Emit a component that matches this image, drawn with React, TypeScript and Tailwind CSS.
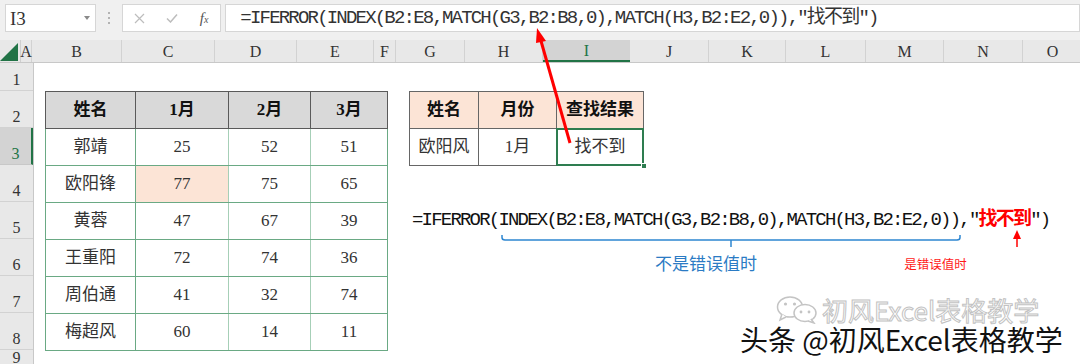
import React from "react";

const serif = "font-['Liberation_Serif','Noto_Sans_CJK_SC',serif]";
const mono = "font-['Liberation_Mono','Noto_Sans_CJK_SC',monospace]";

const columns: [string, string][] = [
  ["A", "w-[11px]"],
  ["B", "w-[90px]"],
  ["C", "w-[93px]"],
  ["D", "w-[82px]"],
  ["E", "w-[77px]"],
  ["F", "w-[22px]"],
  ["G", "w-[69px]"],
  ["H", "w-[78px]"],
  ["I", "w-[87px]"],
  ["J", "w-[79px]"],
  ["K", "w-[77px]"],
  ["L", "w-[80px]"],
  ["M", "w-[78px]"],
  ["N", "w-[79px]"],
  ["O", "w-[60px]"],
];

const rowHeights = ["h-[28px]", "h-[37px]", "h-[37px]", "h-[37px]", "h-[37px]", "h-[37px]", "h-[37px]", "h-[37px]", "h-[19px]"];

const scores: [string, number, number, number][] = [
  ["郭靖", 25, 52, 51],
  ["欧阳锋", 77, 75, 65],
  ["黄蓉", 47, 67, 39],
  ["王重阳", 72, 74, 36],
  ["周伯通", 41, 32, 74],
  ["梅超风", 60, 14, 11],
];

function FormulaText({ red }: { red?: boolean }) {
  return (
    <>
      =IFERROR(INDEX(B2:E8,MATCH(G3,B2:B8,0),MATCH(H3,B2:E2,0)),"
      <span className={red ? "text-[#ff0000] font-bold" : ""}>找不到</span>")
    </>
  );
}

function FormulaBar() {
  return (
    <div className="h-[40px] bg-[#f0f0f0] flex items-start pt-[4px] pl-[5px]">
      <div className="w-[91px] h-[28px] bg-white border border-[#d6d6d6] flex items-center justify-between pl-[4px] pr-[5px]">
        <span className={`${serif} text-[19px] text-[#333] leading-none`}>I3</span>
        <svg width="6" height="4" viewBox="0 0 6 4">
          <path d="M0 0h6L3 4z" fill="#8a8a8a" />
        </svg>
      </div>
      <div className="w-[27px] h-[28px] flex flex-col items-center justify-center gap-[3px]">
        <span className="w-[2px] h-[2px] bg-[#b3b3b3]" />
        <span className="w-[2px] h-[2px] bg-[#b3b3b3]" />
        <span className="w-[2px] h-[2px] bg-[#b3b3b3]" />
      </div>
      <div className="w-[99px] h-[28px] bg-white border border-[#d6d6d6] flex items-center">
        <div className="w-[33px] flex justify-center">
          <svg width="11" height="11" viewBox="0 0 11 11">
            <path d="M1 1l9 9M10 1l-9 9" stroke="#bdbdbd" strokeWidth="1.2" />
          </svg>
        </div>
        <div className="w-[33px] flex justify-center">
          <svg width="12" height="10" viewBox="0 0 12 10">
            <path d="M1 5.5l3.5 3.5L11 1.5" stroke="#bdbdbd" strokeWidth="1.5" fill="none" />
          </svg>
        </div>
        <div className="w-[33px] flex justify-center">
          <span className={`${serif} italic text-[15px] text-[#555] leading-none`}>
            f<span className="text-[10px]">x</span>
          </span>
        </div>
      </div>
      <div className="ml-[4px] w-[860px] h-[28px] bg-white border border-[#d6d6d6] pl-[14px] flex items-center">
        <span className={`${mono} text-[19px] tracking-[-1.8px] text-[#333] leading-none whitespace-nowrap`}>
          <FormulaText />
        </span>
      </div>
    </div>
  );
}

function ColumnHeaders() {
  return (
    <div className="h-[23px] bg-[#e8e8e8] border-b border-[#c8c8c8] flex">
      <div className="w-[34px] h-full border-r border-[#cfcfcf] flex items-end justify-end pr-[2px] pb-[1px]">
        <svg width="18" height="18" viewBox="0 0 18 18">
          <path d="M18 0V18H0z" fill="#217346" />
        </svg>
      </div>
      {columns.map(([name, w]) => (
        <div
          key={name}
          className={`${w} shrink-0 h-full flex items-center justify-center pt-[2px] ${serif} text-[16px] leading-none ${
            name === "I"
              ? "bg-[#d3d3d3] border-b-2 border-[#217346] text-[#217346]"
              : "border-r border-[#d2d2d2] text-[#333]"
          }`}
        >
          {name}
        </div>
      ))}
    </div>
  );
}

function RowHeaders() {
  return (
    <div className="w-[34px] shrink-0 flex flex-col bg-[#e8e8e8] border-r border-[#c8c8c8]">
      {rowHeights.map((h, i) => (
        <div
          key={i}
          className={`${h} shrink-0 flex items-end justify-center pb-[1px] ${serif} text-[16px] leading-[18px] ${
            i === 2
              ? "bg-[#d3d3d3] border-r-2 border-[#217346] text-[#217346] border-b border-b-[#c8c8c8]"
              : "border-b border-[#d2d2d2] text-[#333]"
          }`}
        >
          {i + 1}
        </div>
      ))}
    </div>
  );
}

function ScoreTable() {
  const th = "border border-[#5a5a5a] bg-[#d9d9d9] font-bold text-[17px] text-[#111]";
  const td = "border border-[#6aa984] text-[17px] text-[#333] text-center";
  return (
    <table className={`w-full h-full border-collapse table-fixed ${serif}`}>
      <colgroup>
        <col className="w-[90px]" />
        <col className="w-[93px]" />
        <col className="w-[82px]" />
        <col className="w-[77px]" />
      </colgroup>
      <thead>
        <tr className="h-[37px]">
          <th className={th}>姓名</th>
          <th className={th}>1月</th>
          <th className={th}>2月</th>
          <th className={th}>3月</th>
        </tr>
      </thead>
      <tbody>
        {scores.map(([name, a, b, c]) => (
          <tr key={name} className="h-[37px]">
            <td className={td}>{name}</td>
            <td className={`${td} border-r-[#a6cfb7] ${a === 77 ? "bg-[#fce4d6]" : ""}`}>{a}</td>
            <td className={`${td} border-r-[#a6cfb7]`}>{b}</td>
            <td className={td}>{c}</td>
          </tr>
        ))}
      </tbody>
    </table>
  );
}

function LookupTable() {
  const th = "border border-[#666] bg-[#fce4d6] font-bold text-[17px] text-[#111]";
  const td = "border border-[#666] text-[17px] text-[#333] text-center";
  return (
    <table className={`w-full h-full border-collapse table-fixed ${serif}`}>
      <colgroup>
        <col className="w-[69px]" />
        <col className="w-[78px]" />
        <col className="w-[87px]" />
      </colgroup>
      <thead>
        <tr className="h-[37px]">
          <th className={th}>姓名</th>
          <th className={th}>月份</th>
          <th className={th}>查找结果</th>
        </tr>
      </thead>
      <tbody>
        <tr className="h-[37px]">
          <td className={td}>欧阳风</td>
          <td className={td}>1月</td>
          <td className={`${td} relative`}>
            找不到
            <div className="absolute inset-[-1px] border-2 border-[#2e7d50]" />
            <div className="absolute right-[-4px] bottom-[-4px] w-[6px] h-[6px] bg-[#2e7d50] border border-white" />
          </td>
        </tr>
      </tbody>
    </table>
  );
}

function Annotation() {
  return (
    <div className="flex flex-col">
      <div className={`mt-[4px] h-[29px] leading-[29px] pl-[3px] ${mono} text-[19px] tracking-[-1.8px] text-[#111] whitespace-nowrap`}>
        <FormulaText red />
      </div>
      <svg width="671" height="18" className="overflow-visible">
        <path
          d="M93 0V2.5Q93 5 96 5H548Q551 5 551 2.5V0M322 5V12"
          stroke="#2e86d1"
          strokeWidth="1.5"
          fill="none"
        />
        <path d="M608 12V-1" stroke="#ff0000" strokeWidth="1.5" />
        <path d="M608 -5L612 4H604z" fill="#ff0000" />
      </svg>
      <div className="flex items-start h-[22px]">
        <div className={`ml-[212px] w-[214px] text-center text-[17px] leading-[20px] text-[#2b7bc4] font-['Noto_Sans_CJK_SC',sans-serif]`}>
          不是错误值时
        </div>
        <div className="w-[363px] pt-[3px] text-center text-[12.5px] leading-[16px] text-[#ff1a1a] font-['Noto_Sans_CJK_SC',sans-serif]">
          是错误值时
        </div>
      </div>
    </div>
  );
}

function Watermark() {
  return (
    <>
      <div className="absolute left-[776px] top-[296px] flex items-center gap-[4px]">
        <svg width="42" height="28" viewBox="0 0 42 28">
          <ellipse cx="14" cy="11" rx="12.5" ry="10" fill="#fff" stroke="#c4c4c4" strokeWidth="1.5" />
          <path d="M6 18l-2 6 6-3" fill="#fff" stroke="#c4c4c4" strokeWidth="1.5" />
          <circle cx="9.5" cy="8" r="1.6" fill="#c4c4c4" />
          <circle cx="18.5" cy="8" r="1.6" fill="#c4c4c4" />
          <ellipse cx="29" cy="17" rx="11" ry="8.5" fill="#fff" stroke="#c4c4c4" strokeWidth="1.5" />
          <path d="M35 23l3 4-6-2" fill="#fff" stroke="#c4c4c4" strokeWidth="1.5" />
          <circle cx="25" cy="16" r="1.4" fill="#c4c4c4" />
          <circle cx="33" cy="16" r="1.4" fill="#c4c4c4" />
        </svg>
        <span className="font-['Noto_Sans_CJK_SC',sans-serif] text-[26px] leading-none text-white [-webkit-text-stroke:1px_#c2c2c2] whitespace-nowrap">
          初风Excel表格教学
        </span>
      </div>
      <div className="absolute left-[740px] top-[322px] font-['Noto_Sans_CJK_SC',sans-serif] text-[28px] leading-[34px] text-[#111] whitespace-nowrap [text-shadow:1px_1px_0_#fff,-1px_-1px_0_#fff,1px_-1px_0_#fff,-1px_1px_0_#fff]">
        头条 @初风Excel表格教学
      </div>
    </>
  );
}

export default function App() {
  return (
    <div className="relative w-[1080px] h-[364px] overflow-hidden bg-white">
      <FormulaBar />
      <ColumnHeaders />
      <div className="flex">
        <RowHeaders />
        <div className="grid grid-cols-[11px_90px_93px_82px_77px_22px_69px_78px_87px_79px_77px_80px_78px_79px_1fr] grid-rows-[28px_repeat(7,37px)_19px] flex-1">
          <div className="col-start-2 col-span-4 row-start-2 row-span-7">
            <ScoreTable />
          </div>
          <div className="col-start-7 col-span-3 row-start-2 row-span-2">
            <LookupTable />
          </div>
          <div className="col-start-7 col-span-9 row-start-5 row-span-4">
            <Annotation />
          </div>
        </div>
      </div>
      <Watermark />
      <svg className="absolute inset-0 pointer-events-none" width="1080" height="364">
        <path d="M570 143L541 41" stroke="#ff0000" strokeWidth="3" />
        <path d="M537 28L546 41L536 43z" fill="#ff0000" />
      </svg>
    </div>
  );
}
